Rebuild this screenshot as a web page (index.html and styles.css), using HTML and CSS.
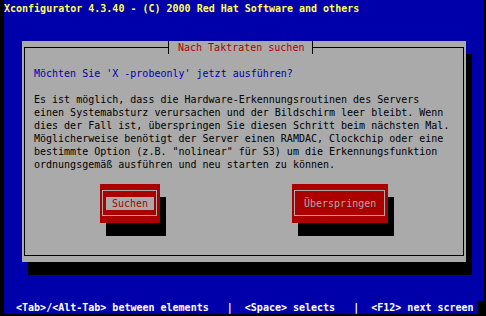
FILE: index.html
```html
<!DOCTYPE html>
<html lang="de">
<head>
    <meta charset="UTF-8">
    <meta name="viewport" content="width=device-width, initial-scale=1.0">
    <title>Xconfigurator</title>
    <link rel="stylesheet" href="styles.css">
</head>
<body>
    <div class="screen">
        <div class="topline">Xconfigurator 4.3.40 - (C) 2000 Red Hat Software and others</div>

        <div class="dialog">
            <div class="frame">
                <div class="caption">Nach Taktraten suchen</div>
                <p class="question">Möchten Sie 'X -probeonly' jetzt ausführen?</p>
                <p class="message">Es ist möglich, dass die Hardware-Erkennungsroutinen des Servers
einen Systemabsturz verursachen und der Bildschirm leer bleibt. Wenn
dies der Fall ist, überspringen Sie diesen Schritt beim nächsten Mal.
Möglicherweise benötigt der Server einen RAMDAC, Clockchip oder eine
bestimmte Option (z.B. "nolinear" für S3) um die Erkennungsfunktion
ordnungsgemäß ausführen und neu starten zu können.</p>
                <div class="buttons">
                    <div class="btn btn-focus">
                        <div class="btn-frame"><span class="btn-label">Suchen</span></div>
                    </div>
                    <div class="btn btn-wide">
                        <div class="btn-frame"><span class="btn-label">Überspringen</span></div>
                    </div>
                </div>
            </div>
        </div>

        <div class="helpline">  &lt;Tab&gt;/&lt;Alt-Tab&gt; between elements   |  &lt;Space&gt; selects   |  &lt;F12&gt; next screen</div>
    </div>
</body>
</html>
```

FILE: styles.css
```css
body {
    margin: 0;
    background-color: #000;
    font-family: "DejaVu Sans Mono", monospace;
    font-size: 10px;
    line-height: 13px;
}
.screen {
    display: flex;
    flex-direction: column;
    width: 480px;
    height: 312px;
    padding-top: 2px;
    margin-left: 4px;
    background-color: #0000aa;
}
.topline {
    height: 13px;
    color: #ffff55;
    font-weight: bold;
    white-space: pre;
}
.dialog {
    display: flex;
    flex-direction: column;
    width: 444px;
    height: 221px;
    margin: 26px 0 0 18px;
    background-color: #aaaaaa;
    box-shadow: 6px 13px 0 #000;
}
.frame {
    position: relative;
    flex: 1;
    margin: 6px 2px;
    padding: 19px 0 0 9px;
    border: 1px solid #000;
    color: #000;
}
.caption {
    position: absolute;
    left: 143px;
    top: -7px;
    height: 13px;
    padding: 0 8px 0 9px;
    border-left: 1px solid #000;
    border-right: 1px solid #000;
    background-color: #aaaaaa;
    color: #aa0000;
    white-space: pre;
}
.question {
    margin: 0;
    color: #0000aa;
    white-space: pre;
}
.message {
    margin: 13px 0 0 0;
    white-space: pre;
}
.buttons {
    display: flex;
    gap: 132px;
    margin: 13px 0 0 66px;
}
.btn {
    width: 60px;
    height: 39px;
    background-color: #aa0000;
    box-shadow: 6px 13px 0 #000;
}
.btn-wide {
    width: 96px;
}
.btn-frame {
    margin: 6px 3px 7px 2px;
    padding: 6px 0 5px 3px;
    border: 1px solid #aaaaaa;
}
.btn-label {
    display: inline-block;
    height: 13px;
    padding: 0 6px;
    color: #aaaaaa;
    white-space: pre;
    vertical-align: top;
}
.btn-focus .btn-label {
    background-color: #aaaaaa;
    color: #aa0000;
}
.helpline {
    display: flex;
    margin-top: auto;
    height: 13px;
    color: #fff;
    font-weight: bold;
    white-space: pre;
}
.helpline::after {
    content: "";
    width: 6px;
    height: 13px;
    margin-left: auto;
    background-color: #000;
}
```
